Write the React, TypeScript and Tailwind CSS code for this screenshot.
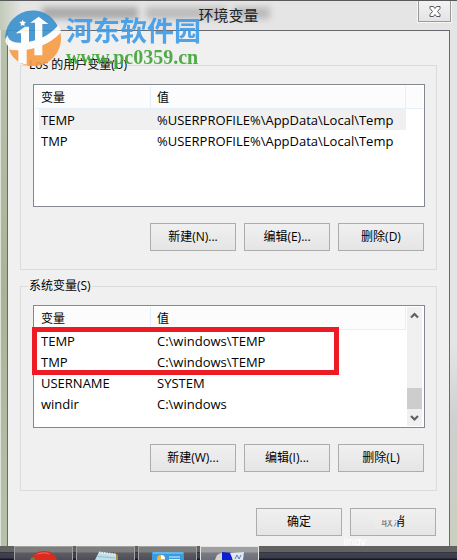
import React from 'react';

interface Variable {
  name: string;
  value: string;
  selected?: boolean;
}

const USER_VARIABLES: Variable[] = [
  { name: 'TEMP', value: '%USERPROFILE%\\AppData\\Local\\Temp', selected: true },
  { name: 'TMP', value: '%USERPROFILE%\\AppData\\Local\\Temp' },
];

const SYSTEM_VARIABLES: Variable[] = [
  { name: 'TEMP', value: 'C:\\windows\\TEMP' },
  { name: 'TMP', value: 'C:\\windows\\TEMP' },
  { name: 'USERNAME', value: 'SYSTEM' },
  { name: 'windir', value: 'C:\\windows' },
];

const DialogButton: React.FC<{ children: React.ReactNode }> = ({ children }) => (
  <button
    type="button"
    className="relative h-7 w-[86px] border border-[#acacac] bg-linear-to-b from-[#f0f0f0] to-[#e5e5e5] text-xs text-black"
  >
    {children}
  </button>
);

const VariableTable: React.FC<{ rows: Variable[]; label: string }> = ({ rows, label }) => (
  <table aria-label={label} className="w-full table-fixed border-separate border-spacing-0 text-left">
    <colgroup>
      <col className="w-1" />
      <col className="w-[112px]" />
      <col />
    </colgroup>
    <thead>
      <tr className="h-[23px] bg-[#fcfcfc] text-xs">
        <td className="border-b border-[#e5effb]" />
        <th className="border-r border-b border-[#e5effb] px-[2px] pt-[2px] font-normal">变量</th>
        <th className="border-r border-b border-[#e5effb] px-[6px] pt-[2px] font-normal">值</th>
      </tr>
    </thead>
    <tbody>
      {rows.map((row) => (
        <tr key={row.name} className="h-[21px] text-[13px] leading-5">
          <td />
          <td className={row.selected ? 'bg-[#f0f0f0] px-[2px]' : 'px-[2px]'}>{row.name}</td>
          <td className={row.selected ? 'bg-[#f0f0f0] px-[6px]' : 'px-[6px]'}>{row.value}</td>
        </tr>
      ))}
    </tbody>
  </table>
);

const ScrollBar: React.FC = () => (
  <div className="mr-px ml-px flex w-[15px] shrink-0 flex-col items-center bg-[#f0f0f0]">
    <svg viewBox="0 0 15 17" className="h-[17px] w-[15px]" fill="none" stroke="#606060" strokeWidth="2.2">
      <path d="M4 10.500 7.500 7l3.500 3.500" />
    </svg>
    <div className="grow" />
    <div className="h-[21px] w-full bg-[#cdcdcd]" />
    <svg viewBox="0 0 15 17" className="h-[17px] w-[15px]" fill="none" stroke="#606060" strokeWidth="2.2">
      <path d="M4 7l3.500 3.500L11 7" />
    </svg>
  </div>
);

const VariableGroup: React.FC<{
  title: string;
  rows: Variable[];
  buttons: string[];
  scrollable?: boolean;
  children?: React.ReactNode;
}> = ({ title, rows, buttons, scrollable, children }) => (
  <fieldset className="border border-[#dcdcdc] pr-[11px] pb-[18px] pl-3">
    <legend className="-ml-[5px] px-[1px] text-xs leading-[18px]">{title}</legend>
    <div className="relative mt-[10px]">
      <div className="flex min-h-[123px] border border-[#828790] bg-white p-px">
        <div className="min-w-0 grow">
          <VariableTable rows={rows} label={title} />
        </div>
        {scrollable ? (
          <ScrollBar />
        ) : (
          <div className="h-[23px] w-[17px] shrink-0 border-b border-[#e5effb] bg-[#fcfcfc]" />
        )}
      </div>
      {children}
    </div>
    <div className="mt-4 flex justify-end gap-2 pr-px">
      {buttons.map((text) => (
        <DialogButton key={text}>{text}</DialogButton>
      ))}
    </div>
  </fieldset>
);

const SiteMark: React.FC = () => (
  <div className="pointer-events-none absolute top-[9px] left-[5px] flex gap-[5px] opacity-90">
    <svg viewBox="0 0 168 168" className="h-14 w-14">
      <path d="M1 93A83 83 0 0 1 160 52C132 84 92 104 48 105 28 106 10 102 1 93Z" fill="#3a91cf" />
      <path d="M12 119C70 127 130 108 166 68A83 83 0 0 1 44 158C30 148 18 136 12 119Z" fill="#f79b43" />
      <path d="M1 93C6 114 28 124 60 119 106 114 150 92 168 64L160 46C130 80 90 97 48 98 24 99 10 92 8 76 3 83 0 88 1 93Z" fill="#fff" />
      <path d="M32 70 60 50h12v62H48V70ZM76 38 101 20l29 22h-18v53l-22 8V38Z" fill="#fff" />
      <path d="M40 106h25v58l-25-7ZM88 94h24v42H88Z" fill="#fff" />
      <path d="m53 29 3 6 7 1-5 5 1 7-6-3-6 3 1-7-5-5 7-1Z" fill="#fff" />
    </svg>
    <div className="pt-[5px] font-bold">
      <div className="text-[27px] leading-8 text-[#3d9be9]">河东软件园</div>
      <div className="font-['Liberation_Serif',serif] text-xl leading-5 text-[#3fa535]">www.pc0359.cn</div>
    </div>
  </div>
);

const BrowserIcon: React.FC = () => (
  <svg viewBox="0 0 28 9" className="h-[9px] w-7">
    <path d="M0 9C3 3 8 0 14 0s11 3 13 9Z" fill="#d92b20" />
    <path d="M6 4C9 1 17 0 21 4c-4-2-10-2-15 0Z" fill="#f2685c" />
    <path d="M1 7l3-1 1 3H0Z" fill="#3f9a3a" />
  </svg>
);

const NotepadIcon: React.FC = () => (
  <svg viewBox="0 0 28 9" className="h-[9px] w-7">
    <path d="M7 1 24 3 25 9H3Z" fill="#bfe0ea" />
    <path d="M24 3l2 1v5h-2Z" fill="#a88a3c" />
    <path d="M7 1.500 24 3.500" stroke="#e9eded" strokeWidth="2" strokeDasharray="1.500 1" />
    <path d="M6 5.500 23 7" stroke="#8cc3d4" />
  </svg>
);

const PanelIcon: React.FC = () => (
  <svg viewBox="0 0 32 9" className="h-[9px] w-8">
    <path d="M0 1h32v8H0Z" fill="#3b9bdc" />
    <path d="M1 2h30" stroke="#8fd0f5" />
    <circle cx="9" cy="8" r="4" fill="#f5b53c" />
    <path d="M9 8V4a4 4 0 0 1 4 4Z" fill="#fff" />
    <path d="M17 6h11M17 8.500h11" stroke="#d8effc" />
  </svg>
);

const ComputerIcon: React.FC = () => (
  <svg viewBox="0 0 30 9" className="h-[9px] w-[30px]">
    <path d="M2 4 8 1v8H0Z" fill="#d6d6ce" />
    <path d="M7 1 17 2v7H7Z" fill="#0a1fd0" />
    <path d="M15 2 29 1 28 9H18Z" fill="#dfe8f4" />
    <path d="m20 8 2-4 2 4 2-4" stroke="#5b7fae" fill="none" />
  </svg>
);

const TASKS = [
  { name: 'Browser', icon: <BrowserIcon /> },
  { name: 'Notepad', icon: <NotepadIcon /> },
  { name: 'Control Panel', icon: <PanelIcon /> },
  { name: 'System', icon: <ComputerIcon />, active: true },
];

const TaskBar: React.FC = () => (
  <nav className="absolute inset-x-0 bottom-0 flex h-[14px] gap-[3px] overflow-hidden bg-[linear-gradient(#626262_6px,#35363e_6px,#35363e_7px,#414355_7px,#3a3c4b_12px,#16171d_13px)] pl-[14px]">
    {TASKS.map((task) => (
      <button
        key={task.name}
        type="button"
        aria-label={task.name}
        className={
          task.active
            ? 'flex h-6 w-[59px] justify-center border border-[#e4e4e4] bg-[linear-gradient(#a0a0a0_5px,#797b86_6px,#6b6d78_13px)] pt-[4px]'
            : 'flex h-6 w-[59px] justify-center border border-[#a2a2a2] bg-[linear-gradient(#7e7e7e_5px,#5c5d64_6px,#4c4d57_13px)] pt-[4px]'
        }
      >
        {task.icon}
      </button>
    ))}
  </nav>
);

const App: React.FC = () => {
  return (
    <div className="relative flex min-h-screen flex-col overflow-hidden border-t border-[#5a585a] bg-linear-to-r from-[#c2cab8] to-[#e5e5e5] to-[22px] font-['Open_Sans','Noto_Sans_CJK_SC',sans-serif] text-black">
      <header className="relative grid h-[29px] grid-cols-[1fr_auto_1fr]">
        {/* text of the window behind shows through the glass title bar */}
        <div aria-hidden="true" className="absolute top-[6px] left-[42px] flex gap-2 blur-[3px]">
          <div className="h-3 w-24 bg-[#aaa]" />
          <div className="h-3 w-20 bg-[#bcbcbc]" />
          <div className="h-3 w-9 bg-[#bbb]" />
        </div>
        <h1 className="relative col-start-2 text-[15px] leading-7 text-[#222]">环境变量</h1>
        <button
          type="button"
          aria-label="关闭"
          className="mr-[6px] flex h-[21px] w-[33px] items-center justify-center justify-self-end border border-t-0 border-[#999] bg-linear-to-b from-[#f3f3f3] to-[#e4e4e4] shadow-[0_0_0_1px_#f7f7f7]"
        >
          <svg viewBox="0 0 12 11" className="h-[11px] w-3" fill="#fff" stroke="#555864">
            <path d="M1 .500h3.500L6 2.500 7.500.500H11v2L8.500 5.500 11 8.500v2H7.500L6 8.500l-1.500 2H1v-2l2.500-3L1 2.500Z" />
          </svg>
        </button>
      </header>
      <div className="flex">
        <div className="w-[7px] shrink-0 border-l border-[#dfe2dc] bg-linear-to-b from-[#b9c3ac] via-[#a9b496] to-[#b7c2ab]" />
        <main className="min-w-0 grow border border-[#6a6a6e] bg-[#f0f0f0] px-3 pt-[25px]">
          <VariableGroup
            title="Los 的用户变量(U)"
            rows={USER_VARIABLES}
            buttons={['新建(N)...', '编辑(E)...', '删除(D)']}
          />
          <div className="h-[7px]" />
          <VariableGroup
            title="系统变量(S)"
            rows={SYSTEM_VARIABLES}
            buttons={['新建(W)...', '编辑(I)...', '删除(L)']}
            scrollable
          >
            <div className="pointer-events-none absolute top-[22px] -left-px h-12 w-[307px] border-[5px] border-[#ed1c24]" />
          </VariableGroup>
          <div className="mt-[17px] mb-4 flex justify-end gap-2 pr-px">
            <DialogButton>确定</DialogButton>
            <DialogButton>
              取消
              <span className="absolute top-[6px] left-6 h-[5px] w-6 bg-[#eee]" />
              <span className="absolute top-[10px] left-6 h-[10px] w-[22px] bg-[#eee]/50" />
            </DialogButton>
          </div>
        </main>
        <div className="w-[7px] shrink-0 bg-linear-to-b from-[#e5e5e5] from-60% via-[#cfcfcf] via-75% to-[#c9cfbd]" />
      </div>
      <SiteMark />
      <div className="absolute right-[91px] bottom-[11px] font-['Liberation_Sans',sans-serif] text-[11px] leading-4 text-white">
        jingy
      </div>
      <TaskBar />
    </div>
  );
};

export default App;
